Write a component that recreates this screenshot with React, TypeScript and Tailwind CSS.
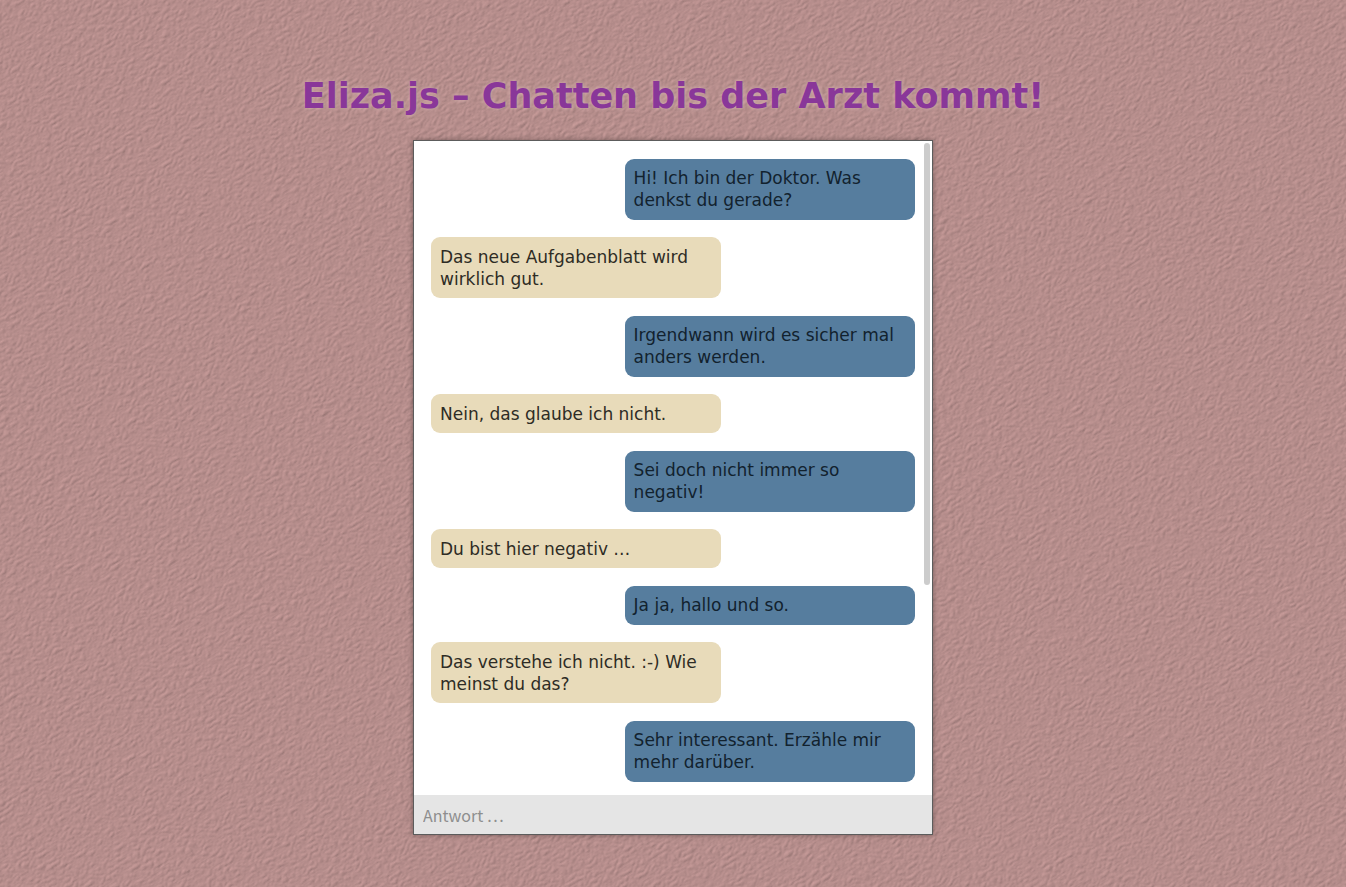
type Message = { from: 'doctor' | 'patient'; text: string };

const messages: Message[] = [
  { from: 'doctor', text: 'Hi! Ich bin der Doktor. Was denkst du gerade?' },
  { from: 'patient', text: 'Das neue Aufgabenblatt wird wirklich gut.' },
  { from: 'doctor', text: 'Irgendwann wird es sicher mal anders werden.' },
  { from: 'patient', text: 'Nein, das glaube ich nicht.' },
  { from: 'doctor', text: 'Sei doch nicht immer so negativ!' },
  { from: 'patient', text: 'Du bist hier negativ …' },
  { from: 'doctor', text: 'Ja ja, hallo und so.' },
  { from: 'patient', text: 'Das verstehe ich nicht. :-) Wie meinst du das?' },
  { from: 'doctor', text: 'Sehr interessant. Erzähle mir mehr darüber.' },
];

// Fine plaster wall, lit from the upper left.
function Wall() {
  return (
    <svg className="absolute inset-0 -z-10 h-full w-full" aria-hidden="true">
      <filter id="plaster" x="0" y="0" width="100%" height="100%" colorInterpolationFilters="sRGB">
        <feTurbulence type="turbulence" baseFrequency="0.15 0.2" numOctaves="4" seed="11" result="noise" />
        <feDiffuseLighting in="noise" surfaceScale="0.36" diffuseConstant="1.02" lightingColor="#d4a5a3">
          <feDistantLight azimuth="250" elevation="57" />
        </feDiffuseLighting>
      </filter>
      <g transform="rotate(-32)">
        <rect x="-60%" y="-10%" width="190%" height="260%" filter="url(#plaster)" />
      </g>
    </svg>
  );
}

function Bubble({ from, text }: Message) {
  const look =
    from === 'doctor'
      ? 'mt-[18px] self-end bg-[#567d9e] pt-2 pb-[9px] text-[#12222e]'
      : 'mt-[17px] self-start bg-[#e8dbba] pt-[9px] pb-2 text-[#2e2c25]';
  return <li className={`w-3/5 rounded-[9px] px-[9px] text-[17px] leading-[22px] ${look}`}>{text}</li>;
}

export default function App() {
  return (
    <div className="relative isolate flex h-screen flex-col items-center overflow-hidden bg-[#b48c8a] px-4 pt-[76px] pb-[52px] font-['DejaVu_Sans',sans-serif]">
      <Wall />
      <h1 className="mb-6 text-center text-[35px] leading-10 font-bold text-[#893799] [text-shadow:0_0_4px_#d5b1b0]">
        Eliza.js – Chatten bis der Arzt kommt!
      </h1>
      <main className="relative flex min-h-0 w-full max-w-[520px] flex-1 flex-col border border-[#5c5c5c] bg-white shadow-[0_0_5px_rgba(0,0,0,0.35)]">
        <ul className="flex min-h-0 flex-1 flex-col overflow-y-auto px-[17px] pb-3 [scrollbar-width:none]">
          {messages.map((message) => (
            <Bubble key={message.text} {...message} />
          ))}
        </ul>
        <div className="absolute top-0.5 right-0.5 h-[442px] w-1.5 rounded-full bg-[#cccccc]" />
        <form onSubmit={(event) => event.preventDefault()}>
          <input
            type="text"
            aria-label="Antwort"
            placeholder="Antwort …"
            className="block h-[39px] w-full bg-[#e5e5e5] px-[9px] font-['Noto_Sans_CJK_KR',sans-serif] text-base text-[#222222] outline-none placeholder:text-[#8e8e8e]"
          />
        </form>
      </main>
    </div>
  );
}
